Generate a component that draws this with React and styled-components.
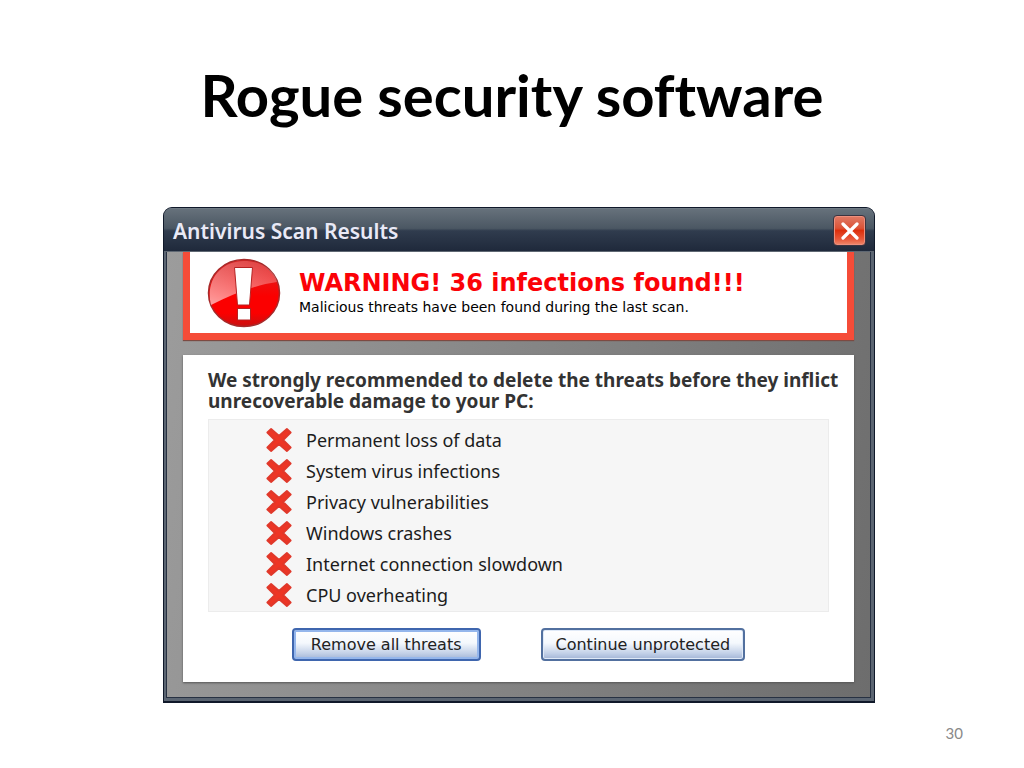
import React from "react";
import styled, { createGlobalStyle } from "styled-components";

const GlobalStyle = createGlobalStyle`
  * {
    box-sizing: border-box;
  }
  body {
    margin: 0;
    background: #fff;
    font-family: "Noto Sans", "Open Sans", sans-serif;
  }
  h1, h2, h3, p, ul {
    margin: 0;
    padding: 0;
    font-weight: normal;
  }
`;

const Slide = styled.main`
  display: flex;
  flex-direction: column;
  min-height: 100vh;
  padding: 59px 61px 25px;
`;

const SlideTitle = styled.h1`
  font-family: Lato, sans-serif;
  font-size: 58px;
  font-weight: bold;
  font-variant-ligatures: none;
  line-height: 72px;
  text-align: center;
  color: #000;
`;

const SlideNumber = styled.footer`
  margin-top: auto;
  font-family: Lato, sans-serif;
  font-size: 15px;
  line-height: 20px;
  text-align: right;
  color: #898989;
`;

const Window = styled.section`
  display: flex;
  flex-direction: column;
  margin: 76px 88px 0 102px;
  border: 1px solid #10192a;
  border-bottom-width: 2px;
  border-radius: 9px 9px 0 0;
  background: #5b6572;
  overflow: hidden;
`;

const TitleBar = styled.header`
  display: flex;
  align-items: center;
  justify-content: space-between;
  height: 44px;
  padding: 1px 8px 0 9px;
  border-top: 1px solid #6f7a84;
  border-bottom: 1px solid #5f6873;
  background: linear-gradient(#66717b 0, #4b5763 46%, #303c4e 52%, #1f293b 100%);
`;

const WindowTitle = styled.h2`
  font-size: 21px;
  font-weight: 600;
  line-height: 28px;
  color: #e9e9f6;
`;

const CloseButton = styled.button`
  display: flex;
  align-items: center;
  justify-content: center;
  width: 33px;
  height: 31px;
  padding: 0;
  border: 1px solid #3c3440;
  border-radius: 4px;
  background: linear-gradient(#e07b66 0, #dc5337 42%, #dd2f0c 50%, #e8583a 80%, #ee8a6e 100%);
  box-shadow: inset 0 0 0 1px #ee8f7c;
`;

const WindowBody = styled.div`
  display: flex;
  flex-direction: column;
  gap: 15px;
  margin: 0 3px 3px 2px;
  padding: 0 16px 15px;
  border: 1px solid #273142;
  border-top: 0;
  background: linear-gradient(100deg, #9c9c9c 0, #878787 45%, #6d6d6d 100%);
`;

const Alert = styled.div`
  display: flex;
  align-items: flex-start;
  gap: 18px;
  padding: 6px 17px 5px;
  border: 7px solid #f54c38;
  border-top: 0;
  background: #fff;
  box-shadow: 0 1px 1px #7c4a42;
`;

const AlertText = styled.div`
  padding-top: 10px;
`;

const AlertTitle = styled.h3`
  font-family: "DejaVu Sans", sans-serif;
  font-size: 24px;
  font-weight: bold;
  line-height: 30px;
  color: #fb0207;
`;

const AlertNote = styled.p`
  font-family: "DejaVu Sans", sans-serif;
  font-size: 14px;
  line-height: 18px;
  color: #000;
`;

const Panel = styled.div`
  padding: 15px 10px 21px 25px;
  background: #fff;
  box-shadow: 0 1px 2px #555;
`;

const Advice = styled.p`
  margin-bottom: 7px;
  font-size: 19px;
  font-weight: bold;
  line-height: 21px;
  color: #333;
`;

const ThreatList = styled.ul`
  margin-right: 15px;
  padding: 4px 0 1px 56px;
  border: 1px solid #ececec;
  background: #f6f6f6;
  list-style: none;
`;

const Threat = styled.li`
  display: flex;
  align-items: center;
  gap: 13px;
  height: 31px;
  font-size: 18px;
  color: #1c1c1c;
`;

const Actions = styled.div`
  display: flex;
  justify-content: center;
  gap: 60px;
  margin: 16px 15px 0 0;
`;

const ActionButton = styled.button`
  height: 33px;
  padding: 0 ${(props) => (props.$primary ? "17px" : "13px")};
  border: 2px solid ${(props) => (props.$primary ? "#3f66ae" : "#52709f")};
  border-radius: 4px;
  background: linear-gradient(#fff 0, #f4f8fd 45%, #c3d1e8 80%, #a3b5d6 100%);
  box-shadow: ${(props) =>
    props.$primary ? "inset 0 0 0 2px #94b6ec" : "inset 0 0 0 1px #dfe9f7"};
  font-family: "DejaVu Sans", sans-serif;
  font-size: 16px;
  color: #222;
`;

const threats = [
  "Permanent loss of data",
  "System virus infections",
  "Privacy vulnerabilities",
  "Windows crashes",
  "Internet connection slowdown",
  "CPU overheating",
];

function WarningIcon() {
  return (
    <svg width="74" height="70" viewBox="0 0 74 70" aria-hidden="true">
      <defs>
        <linearGradient id="ball" x1="0" y1="0" x2="0" y2="1">
          <stop offset="0" stopColor="#d82626" />
          <stop offset="0.55" stopColor="#fb0000" />
          <stop offset="0.8" stopColor="#fb0000" />
          <stop offset="1" stopColor="#c81010" />
        </linearGradient>
        <linearGradient id="shine" x1="0.7" y1="0" x2="0.2" y2="1">
          <stop offset="0" stopColor="#fff" stopOpacity="0.15" />
          <stop offset="1" stopColor="#fff" stopOpacity="0.6" />
        </linearGradient>
      </defs>
      <ellipse cx="37" cy="35" rx="35.5" ry="33.5" fill="url(#ball)" stroke="#a62a2a" strokeWidth="1.5" />
      <path d="M4 47C-2 22 14 3 37 3c18 0 31 10 33 21C48 27 26 36 4 47z" fill="url(#shine)" />
      <path d="M27.500 9.500h18l-3 37.500h-12z" fill="#fff" stroke="#b52222" />
      <rect x="30.500" y="50.500" width="13" height="11.500" fill="#fff" stroke="#b52222" />
    </svg>
  );
}

function CrossIcon() {
  return (
    <svg width="28" height="26" viewBox="0 0 28 26" aria-hidden="true">
      <path
        d="M6 2.200L14 9l8-6.800L25.500 5.500 18 13l7.500 7.500L22 23.800 14 17l-8 6.800L2.500 20.500 10 13 2.500 5.500z"
        fill="#ee3524"
        stroke="#e0382a"
        strokeWidth="2.200"
        strokeLinejoin="round"
      />
    </svg>
  );
}

function CloseIcon() {
  return (
    <svg width="20" height="18" viewBox="0 0 20 18" aria-hidden="true">
      <path d="M3 2l14 14M17 2L3 16" stroke="#fff" strokeWidth="3.200" strokeLinecap="round" />
    </svg>
  );
}

function App() {
  return (
    <>
      <GlobalStyle />
      <Slide>
        <SlideTitle>Rogue security software</SlideTitle>
        <Window>
          <TitleBar>
            <WindowTitle>Antivirus Scan Results</WindowTitle>
            <CloseButton type="button" aria-label="Close">
              <CloseIcon />
            </CloseButton>
          </TitleBar>
          <WindowBody>
            <Alert>
              <WarningIcon />
              <AlertText>
                <AlertTitle>WARNING! 36 infections found!!!</AlertTitle>
                <AlertNote>
                  Malicious threats have been found during the last scan.
                </AlertNote>
              </AlertText>
            </Alert>
            <Panel>
              <Advice>
                We strongly recommended to delete the threats before they
                inflict unrecoverable damage to your PC:
              </Advice>
              <ThreatList>
                {threats.map((threat) => (
                  <Threat key={threat}>
                    <CrossIcon />
                    {threat}
                  </Threat>
                ))}
              </ThreatList>
              <Actions>
                <ActionButton type="button" $primary>
                  Remove all threats
                </ActionButton>
                <ActionButton type="button">Continue unprotected</ActionButton>
              </Actions>
            </Panel>
          </WindowBody>
        </Window>
        <SlideNumber>30</SlideNumber>
      </Slide>
    </>
  );
}

export default App;
